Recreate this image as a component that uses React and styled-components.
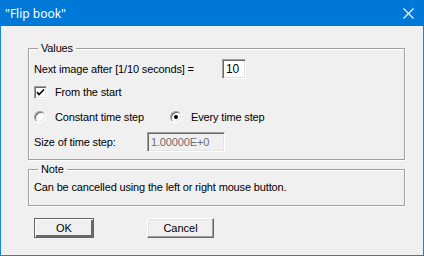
import React from 'react';
import styled, { createGlobalStyle } from 'styled-components';

const Global = createGlobalStyle`
  html, body { margin: 0; padding: 0; background: #f0f0f0; }
  * { box-sizing: border-box; }
`;

const Window = styled.div`
  width: 424px;
  height: 256px;
  display: flex;
  flex-direction: column;
  background: #f0f0f0;
  border: 1px solid #1883d7;
  border-top: none;
  font-family: "Liberation Sans", Arial, sans-serif;
  font-size: 11px;
  letter-spacing: -0.15px;
  color: #000;
`;

const TitleBar = styled.div`
  height: 26px;
  margin: 0 -1px;
  background: #0078d7;
  display: flex;
  align-items: center;
  justify-content: space-between;
  padding: 0 10px 0 5px;
  color: #fff;
  font-family: "Noto Sans", "Open Sans", sans-serif;
  font-size: 12px;
  letter-spacing: 0;
`;

const Body = styled.div`
  flex: 1;
  display: flex;
  flex-direction: column;
  padding: 16px 18px 0 27px;
`;

const Group = styled.fieldset`
  margin: ${p => p.top || 0}px 0 0 0;
  padding: ${p => p.pt}px 5px ${p => p.pb}px 5px;
  border: 1px solid #a0a0a0;
  box-shadow: 1px 1px 0 #fff, inset 1px 1px 0 #fff;
  min-width: 0;
`;

const Legend = styled.legend`
  padding: 0 3px;
  margin-left: 4px;
  line-height: 13px;
`;

const Row = styled.div`
  display: flex;
  align-items: center;
  height: ${p => p.h}px;
  margin-top: ${p => p.mt || 0}px;
`;

const Label = styled.span`
  width: ${p => p.w}px;
  flex: none;
  line-height: 13px;
`;

const TextBox = styled.div`
  width: ${p => p.w}px;
  height: 20px;
  flex: none;
  display: flex;
  align-items: center;
  padding-left: 3px;
  background: ${p => (p.disabled ? '#f0f0f0' : '#fff')};
  color: ${p => (p.disabled ? '#6d6d6d' : '#000')};
  border: 1px solid;
  border-color: #a0a0a0 #fff #fff #a0a0a0;
  box-shadow: inset 1px 1px 0 #696969, inset -1px -1px 0 #e3e3e3;
  font-size: ${p => (p.disabled ? 11 : 12)}px;
`;

const Choice = styled.label`
  display: flex;
  align-items: center;
  width: ${p => p.w || 'auto'}px;
  flex: none;
`;

const CheckBox = styled.span`
  width: 13px;
  height: 13px;
  flex: none;
  display: flex;
  align-items: center;
  justify-content: center;
  background: #fff;
  border: 1px solid;
  border-color: #a0a0a0 #fff #fff #a0a0a0;
  box-shadow: inset 1px 1px 0 #696969, inset -1px -1px 0 #e3e3e3;
  margin-right: 8px;
`;

const Radio = styled.span`
  width: 12px;
  height: 12px;
  flex: none;
  border-radius: 50%;
  background: #fff;
  border: 1px solid;
  border-color: #a0a0a0 #fff #fff #a0a0a0;
  box-shadow: inset 1px 1px 0 #696969, inset -1px -1px 0 #e3e3e3;
  display: flex;
  align-items: center;
  justify-content: center;
  margin-right: 9px;
  &::after {
    content: '';
    width: 4px;
    height: 4px;
    border-radius: 50%;
    background: ${p => (p.checked ? '#000' : 'transparent')};
  }
`;

const Buttons = styled.div`
  display: flex;
  margin-top: 12px;
  padding-left: 6px;
  gap: 53px;
`;

const Button = styled.button`
  width: ${p => p.w}px;
  height: 20px;
  padding: 0;
  font-family: "Liberation Sans", Arial, sans-serif;
  font-size: 11px;
  color: #000;
  background: #f0f0f0;
  border: 1px solid;
  border-color: ${p => (p.primary ? '#646464' : '#fff #696969 #696969 #fff')};
  box-shadow: ${p =>
    p.primary
      ? 'inset 1px 1px 0 #fff, inset -2px -2px 0 #696969'
      : 'inset -1px -1px 0 #a0a0a0, inset 1px 1px 0 #e3e3e3'};
`;

const CloseIcon = () => (
  <svg width="11" height="11" viewBox="0 0 11 11">
    <path d="M0.5 0.5 L10.5 10.5 M10.5 0.5 L0.5 10.5" stroke="#fff" strokeWidth="1.1" />
  </svg>
);

const Check = () => (
  <svg width="9" height="9" viewBox="0 0 9 9">
    <path d="M1 4 L3 6.5 L8 1.5" stroke="#000" strokeWidth="1.6" fill="none" />
  </svg>
);

export default function App() {
  return (
    <>
      <Global />
      <Window>
        <TitleBar>
          <span>"Flip book"</span>
          <CloseIcon />
        </TitleBar>
        <Body>
          <Group pt={4} pb={7}>
            <Legend>Values</Legend>
            <Row h={20}>
              <Label w={188}>Next image after [1/10 seconds] =</Label>
              <TextBox w={24}>10</TextBox>
            </Row>
            <Row h={14} mt={6}>
              <Choice>
                <CheckBox><Check /></CheckBox>
                From the start
              </Choice>
            </Row>
            <Row h={14} mt={11}>
              <Choice w={136}>
                <Radio />
                Constant time step
              </Choice>
              <Choice>
                <Radio checked />
                Every time step
              </Choice>
            </Row>
            <Row h={20} mt={8}>
              <Label w={113}>Size of time step:</Label>
              <TextBox w={78} disabled>1.00000E+0</TextBox>
            </Row>
          </Group>
          <Group top={3} pt={5} pb={11}>
            <Legend>Note</Legend>
            <Row h={13}>
              <Label>Can be cancelled using the left or right mouse button.</Label>
            </Row>
          </Group>
          <Buttons>
            <Button w={60} primary>OK</Button>
            <Button w={67}>Cancel</Button>
          </Buttons>
        </Body>
      </Window>
    </>
  );
}
